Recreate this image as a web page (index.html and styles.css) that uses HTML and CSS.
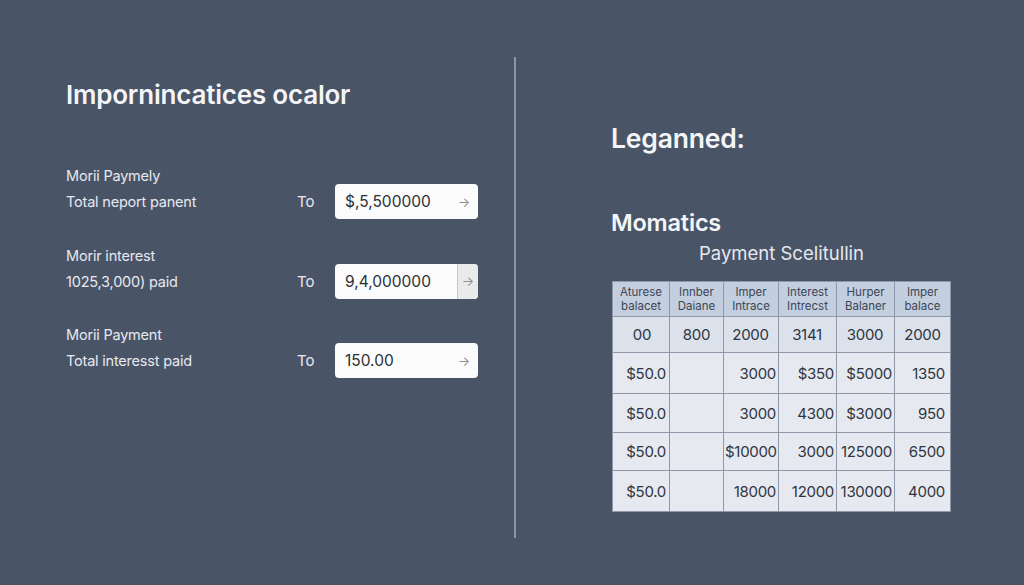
FILE: index.html
```html
<!DOCTYPE html>
<html>
<head>
<meta charset="utf-8">
<link rel="stylesheet" href="styles.css">
</head>
<body>
<div class="page">
  <section class="left">
    <h1 class="title">Impornincatices ocalor</h1>
    <div class="groups">
      <div class="group">
        <div class="label">Morii Paymely</div>
        <div class="row">
          <span class="rlabel">Total neport panent</span>
          <span class="to">To</span>
          <div class="input"><span class="val">$,5,500000</span><span class="arrow">&#8594;</span></div>
        </div>
      </div>
      <div class="group">
        <div class="label">Morir interest</div>
        <div class="row">
          <span class="rlabel">1025,3,000) paid</span>
          <span class="to">To</span>
          <div class="input"><span class="val">9,4,000000</span><span class="arrow boxed">&#8594;</span></div>
        </div>
      </div>
      <div class="group">
        <div class="label">Morii Payment</div>
        <div class="row">
          <span class="rlabel">Total interesst paid</span>
          <span class="to">To</span>
          <div class="input"><span class="val">150.00</span><span class="arrow">&#8594;</span></div>
        </div>
      </div>
    </div>
  </section>
  <div class="divider"></div>
  <section class="right">
    <h2 class="legend">Leganned:</h2>
    <h3 class="sub">Momatics</h3>
    <div class="tablewrap">
      <div class="caption">Payment Scelitullin</div>
      <table class="sched">
        <thead>
          <tr>
            <th>Aturese<br>balacet</th>
            <th>Innber<br>Daiane</th>
            <th>Imper<br>Intrace</th>
            <th>Interest<br>Intrecst</th>
            <th>Hurper<br>Balaner</th>
            <th>Imper<br>balace</th>
          </tr>
        </thead>
        <tbody>
          <tr class="first"><td>00</td><td>800</td><td>2000</td><td>3141</td><td>3000</td><td>2000</td></tr>
          <tr class="r2"><td>$50.0</td><td></td><td>3000</td><td>$350</td><td>$5000</td><td>1350</td></tr>
          <tr class="r3"><td>$50.0</td><td></td><td>3000</td><td>4300</td><td>$3000</td><td>950</td></tr>
          <tr class="r4"><td>$50.0</td><td></td><td>$10000</td><td>3000</td><td>125000</td><td>6500</td></tr>
          <tr class="r5"><td>$50.0</td><td></td><td>18000</td><td>12000</td><td>130000</td><td>4000</td></tr>
        </tbody>
      </table>
    </div>
  </section>
</div>
</body>
</html>
```

FILE: styles.css
```css
* { box-sizing: border-box; }
html, body {
  margin: 0;
  padding: 0;
  width: 1024px;
  height: 585px;
  overflow: hidden;
  background: #4a5467;
  font-family: "Inter", "Open Sans", "Liberation Sans", sans-serif;
  color: #eef0f4;
}
.page {
  display: flex;
  height: 585px;
}
.left {
  width: 514px;
  padding: 79px 0 0 66px;
}
.title {
  margin: 0;
  font-size: 26px;
  font-weight: 600;
  letter-spacing: -0.2px;
  color: #f4f5f8;
  line-height: 32px;
}
.groups {
  margin-top: 57px;
  display: flex;
  flex-direction: column;
  gap: 28.5px;
}
.group {
  display: flex;
  flex-direction: column;
}
.label {
  font-size: 14.5px;
  line-height: 16px;
  color: #e6e9ef;
  letter-spacing: -0.2px;
}
.row {
  display: flex;
  align-items: center;
  margin-top: 0;
  height: 35px;
}
.rlabel {
  width: 231px;
  font-size: 14.5px;
  color: #e6e9ef;
  letter-spacing: -0.2px;
}
.to {
  width: 38px;
  font-size: 15px;
  color: #e6e9ef;
}
.input {
  width: 143px;
  height: 35px;
  background: #fbfbfc;
  border-radius: 4px;
  display: flex;
  align-items: stretch;
  overflow: hidden;
}
.val {
  flex: 1;
  display: flex;
  align-items: center;
  padding-left: 10px;
  font-size: 15.5px;
  color: #2b2f36;
}
.arrow {
  width: 28px;
  display: flex;
  align-items: center;
  justify-content: center;
  color: #8b8f96;
  font-size: 13px;
}
.arrow.boxed {
  width: 21px;
  background: #e9eaec;
  border-left: 1px solid #c6c9ce;
}
.divider {
  width: 2px;
  margin-top: 57px;
  height: 481px;
  background: #8c95a5;
}
.right {
  flex: 1;
  padding: 122px 0 0 95px;
}
.legend {
  margin: 0;
  font-size: 26.5px;
  font-weight: 600;
  line-height: 32px;
  color: #f4f5f8;
  letter-spacing: -0.2px;
}
.sub {
  margin: 55px 0 0;
  font-size: 23.5px;
  font-weight: 600;
  line-height: 28px;
  color: #f4f5f8;
  letter-spacing: -0.2px;
}
.tablewrap {
  width: 339px;
  margin-left: 1px;
}
.caption {
  text-align: center;
  font-size: 18.5px;
  line-height: 22px;
  margin-top: 5px;
  color: #e6e9ef;
}
.sched {
  margin-top: 17px;
  width: 338px;
  border-collapse: collapse;
  background: #e6e9ef;
  table-layout: fixed;
}
.sched th, .sched td {
  border: 1px solid #8f99a9;
  padding: 0 5px;
  overflow: hidden;
  white-space: nowrap;
}
.sched th {
  background: #c3cedf;
  font-size: 11.5px;
  font-weight: 400;
  line-height: 14px;
  height: 35px;
  color: #3c4656;
  text-align: center;
}
.sched td {
  font-size: 15px;
  letter-spacing: -0.3px;
  color: #2f3541;
  text-align: right;
  height: 38px;
}
.sched th:nth-child(1) { width: 57px; }
.sched th:nth-child(2) { width: 54px; }
.sched th:nth-child(3) { width: 55px; }
.sched th:nth-child(4) { width: 58px; }
.sched th:nth-child(5) { width: 58px; }
.sched th:nth-child(6) { width: 56px; }
.sched tr.first td {
  background: #dbe2ec;
  text-align: center;
  height: 36px;
}
.sched tr.r2 td { height: 41px; }
.sched tr.r3 td { height: 39px; }
.sched tr.r4 td { height: 38px; }
.sched tr.r5 td { height: 41px; }
.sched td:first-child { padding-right: 3px; }
.sched td:nth-child(3), .sched td:nth-child(4), .sched td:nth-child(5) { padding-right: 2px; padding-left: 1px; }
```
